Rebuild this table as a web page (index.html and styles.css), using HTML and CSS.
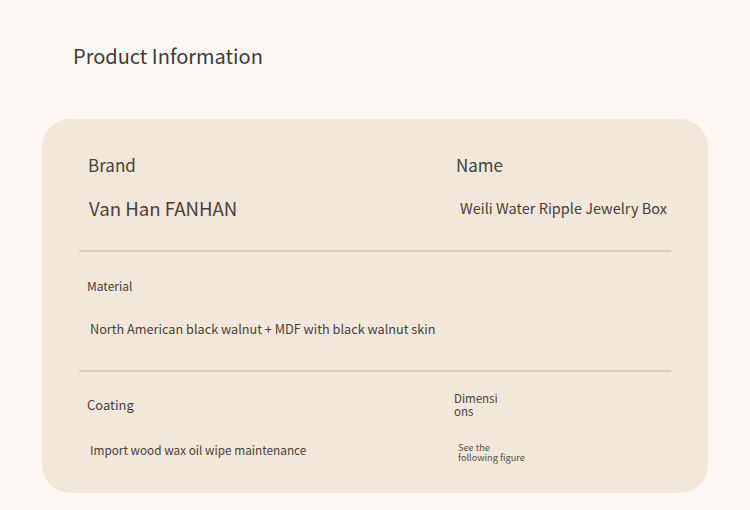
FILE: index.html
```html
<!DOCTYPE html>
<html>
<head>
<meta charset="utf-8">
<link rel="stylesheet" href="styles.css">
</head>
<body>
<div class="page">
  <h1 class="title">Product Information</h1>
  <div class="card">
    <div class="row row-top">
      <div class="cell cell-left">
        <div class="brand-label">Brand</div>
        <div class="brand-value">Van Han FANHAN</div>
      </div>
      <div class="cell cell-right">
        <div class="name-label">Name</div>
        <div class="name-value">Weili Water Ripple Jewelry Box</div>
      </div>
    </div>
    <div class="divider"></div>
    <div class="row row-mid">
      <div class="cell">
        <div class="mat-label">Material</div>
        <div class="mat-value">North American black walnut + MDF with black walnut skin</div>
      </div>
    </div>
    <div class="divider"></div>
    <div class="row row-bot">
      <div class="cell cell-left">
        <div class="coat-label">Coating</div>
        <div class="coat-value">Import wood wax oil wipe maintenance</div>
      </div>
      <div class="cell cell-right">
        <div class="dim-label">Dimensions</div>
        <div class="dim-value">See the following figure</div>
      </div>
    </div>
  </div>
</div>
</body>
</html>
```
FILE: styles.css
```css
html, body {
  margin: 0;
  padding: 0;
  background: #fdf8f4;
}
body {
  font-family: "Noto Sans CJK SC", "Noto Sans", sans-serif;
  color: #4a413a;
}
.page {
  padding-top: 44px;
}
.title {
  margin: 0 0 0 73px;
  font-size: 20px;
  line-height: 24px;
  font-weight: 400;
  color: #3e3a37;
}
.card {
  margin: 51px 42px 0 42px;
  height: 374px;
  box-sizing: border-box;
  background: #f1e7db;
  border-radius: 28px;
  padding: 0 37px;
}
.row {
  display: flex;
}
.cell-left {
  width: 375px;
  flex: none;
}
.cell-right {
  flex: 1;
}
.divider {
  height: 2px;
  background: #d8cec2;
}
.row-top {
  padding-top: 36px;
  padding-bottom: 30px;
}
.brand-label, .name-label {
  font-size: 17px;
  line-height: 20px;
}
.brand-label { padding-left: 9px; }
.name-label { padding-left: 2px; }
.brand-value {
  margin-top: 21px;
  padding-left: 10px;
  font-size: 18.6px;
  line-height: 24px;
}
.name-value {
  margin-top: 23px;
  padding-left: 6px;
  font-size: 14.5px;
  line-height: 20px;
  white-space: nowrap;
}
.row-mid {
  padding-top: 26px;
  padding-bottom: 32px;
}
.mat-label {
  padding-left: 8px;
  font-size: 12px;
  line-height: 16px;
}
.mat-value {
  margin-top: 26px;
  padding-left: 11px;
  font-size: 12.7px;
  line-height: 18px;
}
.row-bot {
  padding-top: 24px;
}
.coat-label {
  padding-left: 8px;
  font-size: 13px;
  line-height: 18px;
}
.coat-value {
  margin-top: 28px;
  padding-left: 11px;
  font-size: 11.8px;
  line-height: 16px;
}
.row-bot .cell-right {
  margin-top: -4px;
}
.dim-label {
  width: 48px;
  font-size: 11.5px;
  line-height: 13px;
  word-break: break-all;
}
.dim-value {
  margin-top: 24px;
  padding-left: 4px;
  width: 72px;
  font-size: 9.2px;
  line-height: 10px;
  color: #5a5048;
}
```
